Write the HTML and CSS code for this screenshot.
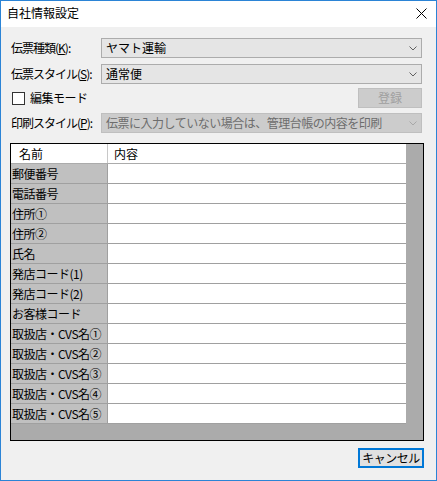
FILE: index.html
```html
<!DOCTYPE html>
<html lang="ja">
<head>
<meta charset="utf-8">
<title>自社情報設定</title>
<link rel="stylesheet" href="styles.css">
</head>
<body>
<div class="window">
  <div class="titlebar">
    <span class="title">自社情報設定</span>
    <svg class="close" width="11" height="11" viewBox="0 0 11 11"><path d="M0.5 0.5 L10.5 10.5 M10.5 0.5 L0.5 10.5" stroke="#000" stroke-width="1" fill="none"/></svg>
  </div>
  <div class="content">
    <div class="row r1">
      <span class="label">伝票種類(<u>K</u>):</span>
      <div class="combo"><span>ヤマト運輸</span><svg class="arrow" width="8" height="5" viewBox="0 0 8 5"><path d="M0.5 0.5 L4 4 L7.5 0.5" stroke="#606060" fill="none"/></svg></div>
    </div>
    <div class="row r2">
      <span class="label">伝票スタイル(<u>S</u>):</span>
      <div class="combo"><span>通常便</span><svg class="arrow" width="8" height="5" viewBox="0 0 8 5"><path d="M0.5 0.5 L4 4 L7.5 0.5" stroke="#606060" fill="none"/></svg></div>
    </div>
    <div class="row r3">
      <label class="check"><span class="box"></span><span class="tight">編集モード</span></label>
      <div class="btn disabled">登録</div>
    </div>
    <div class="row r4">
      <span class="label">印刷スタイル(<u>P</u>):</span>
      <div class="combo disabled"><span class="tight">伝票に入力していない場合は、管理台帳の内容を印刷</span><svg class="arrow" width="8" height="5" viewBox="0 0 8 5"><path d="M0.5 0.5 L4 4 L7.5 0.5" stroke="#a8a8a8" fill="none"/></svg></div>
    </div>
    <div class="grid">
      <div class="grid-inner">
        <div class="hcell name">名前</div><div class="hcell val">内容</div>
        <div class="ncell">郵便番号</div><div class="vcell"></div>
        <div class="ncell">電話番号</div><div class="vcell"></div>
        <div class="ncell">住所①</div><div class="vcell"></div>
        <div class="ncell">住所②</div><div class="vcell"></div>
        <div class="ncell">氏名</div><div class="vcell"></div>
        <div class="ncell">発店コード(1)</div><div class="vcell"></div>
        <div class="ncell">発店コード(2)</div><div class="vcell"></div>
        <div class="ncell">お客様コード</div><div class="vcell"></div>
        <div class="ncell">取扱店・CVS名①</div><div class="vcell"></div>
        <div class="ncell">取扱店・CVS名②</div><div class="vcell"></div>
        <div class="ncell">取扱店・CVS名③</div><div class="vcell"></div>
        <div class="ncell">取扱店・CVS名④</div><div class="vcell"></div>
        <div class="ncell">取扱店・CVS名⑤</div><div class="vcell"></div>
      </div>
    </div>
    <div class="footer">
      <div class="btn default">キャンセル</div>
    </div>
  </div>
</div>
</body>
</html>
```
FILE: styles.css
```css
html, body {
  margin: 0;
  padding: 0;
  background: #f0f0f0;
}
body {
  font-family: "Noto Sans CJK JP", "Noto Sans", sans-serif;
  font-size: 12px;
  color: #000;
}
u { text-decoration: underline; text-underline-offset: 1px; }
.tight { letter-spacing: -0.5px; }
.window {
  width: 437px;
  height: 481px;
  box-sizing: border-box;
  border: 1px solid #2b84d6;
  display: flex;
  flex-direction: column;
  background: #f0f0f0;
}
.titlebar {
  height: 26px;
  background: #fff;
  display: flex;
  align-items: center;
  justify-content: space-between;
  padding: 0 9px 0 6px;
  flex: none;
}
.title {
  font-size: 12px;
  line-height: 14px;
  margin-top: -3px;
}
.close { display: block; margin-top: -2px; }
.content {
  flex: 1;
  padding: 11px 14px 0 9px;
  display: flex;
  flex-direction: column;
}
.row {
  display: flex;
  align-items: center;
  height: 20px;
}
.r1 { margin-bottom: 6px; }
.r2 { margin-bottom: 4px; }
.r3 { margin-bottom: 5px; justify-content: space-between; }
.label {
  width: 90px;
  flex: none;
  padding-left: 1px;
  line-height: 14px;
  white-space: nowrap;
  letter-spacing: -1px;
}
.combo {
  flex: 1;
  height: 20px;
  box-sizing: border-box;
  border: 1px solid #acacac;
  background: #e5e5e5;
  display: flex;
  align-items: center;
  justify-content: space-between;
  padding: 0 4px 0 4px;
  line-height: 14px;
  white-space: nowrap;
}
.combo.disabled {
  background: #cccccc;
  border-color: #bfbfbf;
  color: #6d6d6d;
}
.arrow { display: block; flex: none; }
.check {
  display: flex;
  align-items: center;
  gap: 5px;
  padding-left: 2px;
  line-height: 14px;
}
.box {
  width: 11px;
  height: 11px;
  border: 1px solid #333;
  background: #fff;
  display: block;
}
.btn {
  box-sizing: border-box;
  height: 20px;
  display: flex;
  align-items: center;
  justify-content: center;
  line-height: 14px;
}
.btn.disabled {
  width: 64px;
  background: #cccccc;
  border: 1px solid #bfbfbf;
  color: #a0a0a0;
}
.grid {
  margin-top: 10px;
  height: 298px;
  width: 414px;
  box-sizing: border-box;
  border: 1px solid #000;
  background: #ababab;
}
.grid-inner {
  display: grid;
  grid-template-columns: 96px 299px;
  grid-auto-rows: 20px;
}
.hcell, .ncell, .vcell {
  box-sizing: border-box;
  line-height: 14px;
  white-space: nowrap;
}
.hcell {
  background: #fff;
  height: 19px;
  padding-top: 3px;
}
.hcell.name { padding-left: 8px; border-right: 1px solid #fff; }
.hcell.val { padding-left: 6px; border-left: 1px solid #c8c8c8; }
.ncell {
  background: #c0c0c0;
  border-bottom: 1px solid #a0a0a0;
  padding-left: 1px;
  padding-top: 3px;
  letter-spacing: -0.5px;
}
.vcell {
  background: #fff;
  border-bottom: 1px solid #a0a0a0;
  border-left: 1px solid #a0a0a0;
}
.grid-inner > .hcell { margin-bottom: -1px; }
.footer {
  display: flex;
  justify-content: flex-end;
  padding-top: 7px;
  width: 414px;
}
.btn.default {
  width: 66px;
  background: #e1e1e1;
  border: 2px solid #0078d7;
  letter-spacing: -0.5px;
}
```
